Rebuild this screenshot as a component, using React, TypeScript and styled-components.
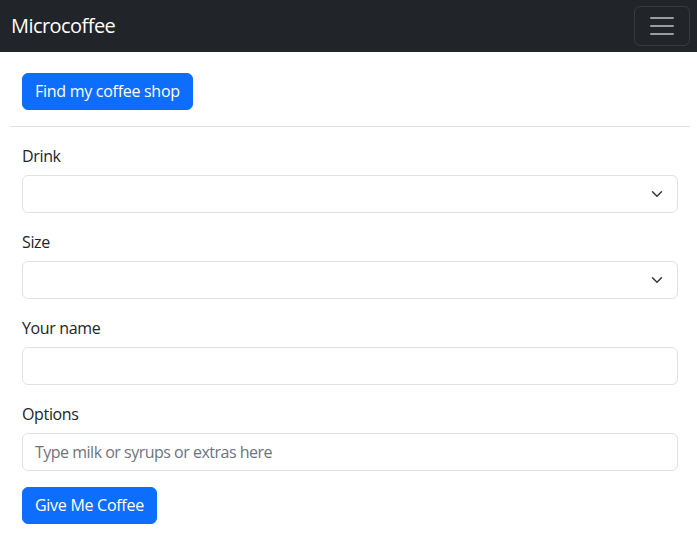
import React from "react";
import styled, { createGlobalStyle } from "styled-components";

const GlobalStyle = createGlobalStyle`
  *, *::before, *::after { box-sizing: border-box; }
  body {
    margin: 0;
    background: #fff;
    color: #212529;
    font-family: "Open Sans", "Noto Sans", sans-serif;
    font-size: 16px;
    line-height: 1.5;
    letter-spacing: -0.35px;
  }
`;

const Navbar = styled.nav`
  height: 52px;
  background: #212529;
  display: flex;
  align-items: center;
  justify-content: space-between;
  padding: 0 7px 0 11px;
`;

const Brand = styled.a`
  color: #fff;
  font-size: 20px;
  line-height: 30px;
  letter-spacing: -0.55px;
  text-decoration: none;
`;

const Toggler = styled.button`
  width: 56px;
  height: 40px;
  background: transparent;
  border: 1px solid rgba(255, 255, 255, 0.1);
  border-radius: 6px;
  display: flex;
  align-items: center;
  justify-content: center;
  padding: 0;
`;

const Main = styled.main`
  padding: 21px 7px 0 10px;
`;

const Inner = styled.div`
  padding: 0 12px;
`;

const Button = styled.button`
  font-family: inherit;
  font-size: 16px;
  line-height: 23px;
  letter-spacing: -0.28px;
  color: #fff;
  background: #0d6efd;
  border: 1px solid #0d6efd;
  border-radius: 6px;
  padding: 6px 12px;
  cursor: pointer;
`;

const Divider = styled.hr`
  margin: 16px 0;
  border: 0;
  border-top: 1px solid #dee2e6;
`;

const Field = styled.div`
  margin-bottom: 16px;
`;

const Label = styled.label`
  display: block;
  margin-bottom: 8px;
  line-height: 24px;
  padding-top: 1px;
  height: 24px;
`;

const Select = styled.select`
  display: block;
  width: 100%;
  height: 38px;
  padding: 6px 36px 6px 12px;
  font-family: inherit;
  font-size: 16px;
  color: #212529;
  background-color: #fff;
  background-image: url("data:image/svg+xml,%3csvg xmlns='http://www.w3.org/2000/svg' viewBox='0 0 16 16'%3e%3cpath fill='none' stroke='%23343a40' stroke-linecap='round' stroke-linejoin='round' stroke-width='2' d='m2 5 6 6 6-6'/%3e%3c/svg%3e");
  background-repeat: no-repeat;
  background-position: right 12px center;
  background-size: 16px 12px;
  border: 1px solid #dee2e6;
  border-radius: 6px;
  appearance: none;
`;

const Input = styled.input`
  display: block;
  width: 100%;
  height: 38px;
  padding: 6px 12px;
  font-family: inherit;
  font-size: 16px;
  letter-spacing: -0.5px;
  color: #212529;
  background: #fff;
  border: 1px solid #dee2e6;
  border-radius: 6px;
  &::placeholder { color: #6c757d; opacity: 1; }
`;

const TogglerIcon = () => (
  <svg width="30" height="30" viewBox="0 0 30 30">
    <path
      stroke="rgba(255,255,255,0.55)"
      strokeLinecap="round"
      strokeMiterlimit="10"
      strokeWidth="2"
      d="M4 7h22M4 15h22M4 23h22"
    />
  </svg>
);

export default function App() {
  return (
    <>
      <GlobalStyle />
      <Navbar>
        <Brand href="#">Microcoffee</Brand>
        <Toggler aria-label="Toggle navigation">
          <TogglerIcon />
        </Toggler>
      </Navbar>
      <Main>
        <Inner>
          <Button>Find my coffee shop</Button>
        </Inner>
        <Divider />
        <Inner>
          <Field>
            <Label>Drink</Label>
            <Select defaultValue="">
              <option value=""></option>
            </Select>
          </Field>
          <Field>
            <Label>Size</Label>
            <Select defaultValue="">
              <option value=""></option>
            </Select>
          </Field>
          <Field>
            <Label>Your name</Label>
            <Input type="text" />
          </Field>
          <Field>
            <Label>Options</Label>
            <Input type="text" placeholder="Type milk or syrups or extras here" />
          </Field>
          <Button>Give Me Coffee</Button>
        </Inner>
      </Main>
    </>
  );
}
